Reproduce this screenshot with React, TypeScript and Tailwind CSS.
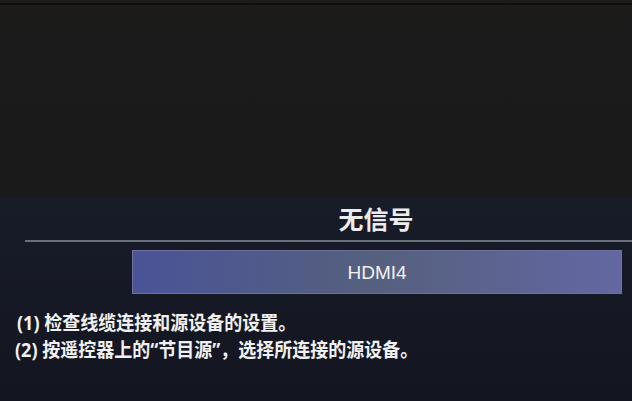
export default function App() {
  return (
    <div className="flex h-[401px] w-[632px] flex-col overflow-hidden bg-[#151924] font-['Noto_Sans','Noto_Sans_CJK_SC',sans-serif]">
      {/* blank screen above the overlay */}
      <div className="h-[198px] shrink-0 bg-gradient-to-b from-[#1c1b1a] to-[#1a1a1c] pt-[3px]">
        <div className="h-[2px] bg-[#0f0f0f]" />
      </div>

      {/* no signal panel */}
      <div className="flex flex-1 flex-col bg-gradient-to-b from-[#181c29] to-[#131620] pt-[8px]">
        <div className="ml-[130px] w-[492px] text-center text-[25px] font-semibold leading-[26px] text-[#ececec]">
          无信号
        </div>
        <div className="ml-[25px] mt-[8px] h-[2px] bg-[#6b6f7c]" />
        <div className="ml-[132px] mt-[8px] flex h-[44px] w-[490px] items-center justify-center border border-[#6d719c] bg-gradient-to-r from-[#4a5397] via-[#56607e] to-[#6367a3]">
          <span className="pt-[2px] font-['Liberation_Sans',sans-serif] text-[19px] font-medium text-[#f2f2f2]">HDMI4</span>
        </div>
        <div className="mt-[15px] origin-top-left scale-y-110 pl-[17px] text-[18px] font-bold leading-[25px] text-[#f0f0f0]">
          <p>(1) 检查线缆连接和源设备的设置。</p>
          <p className="-ml-[2px]">(2) 按遥控器上的“节目源”，选择所连接的源设备。</p>
        </div>
      </div>
    </div>
  );
}
